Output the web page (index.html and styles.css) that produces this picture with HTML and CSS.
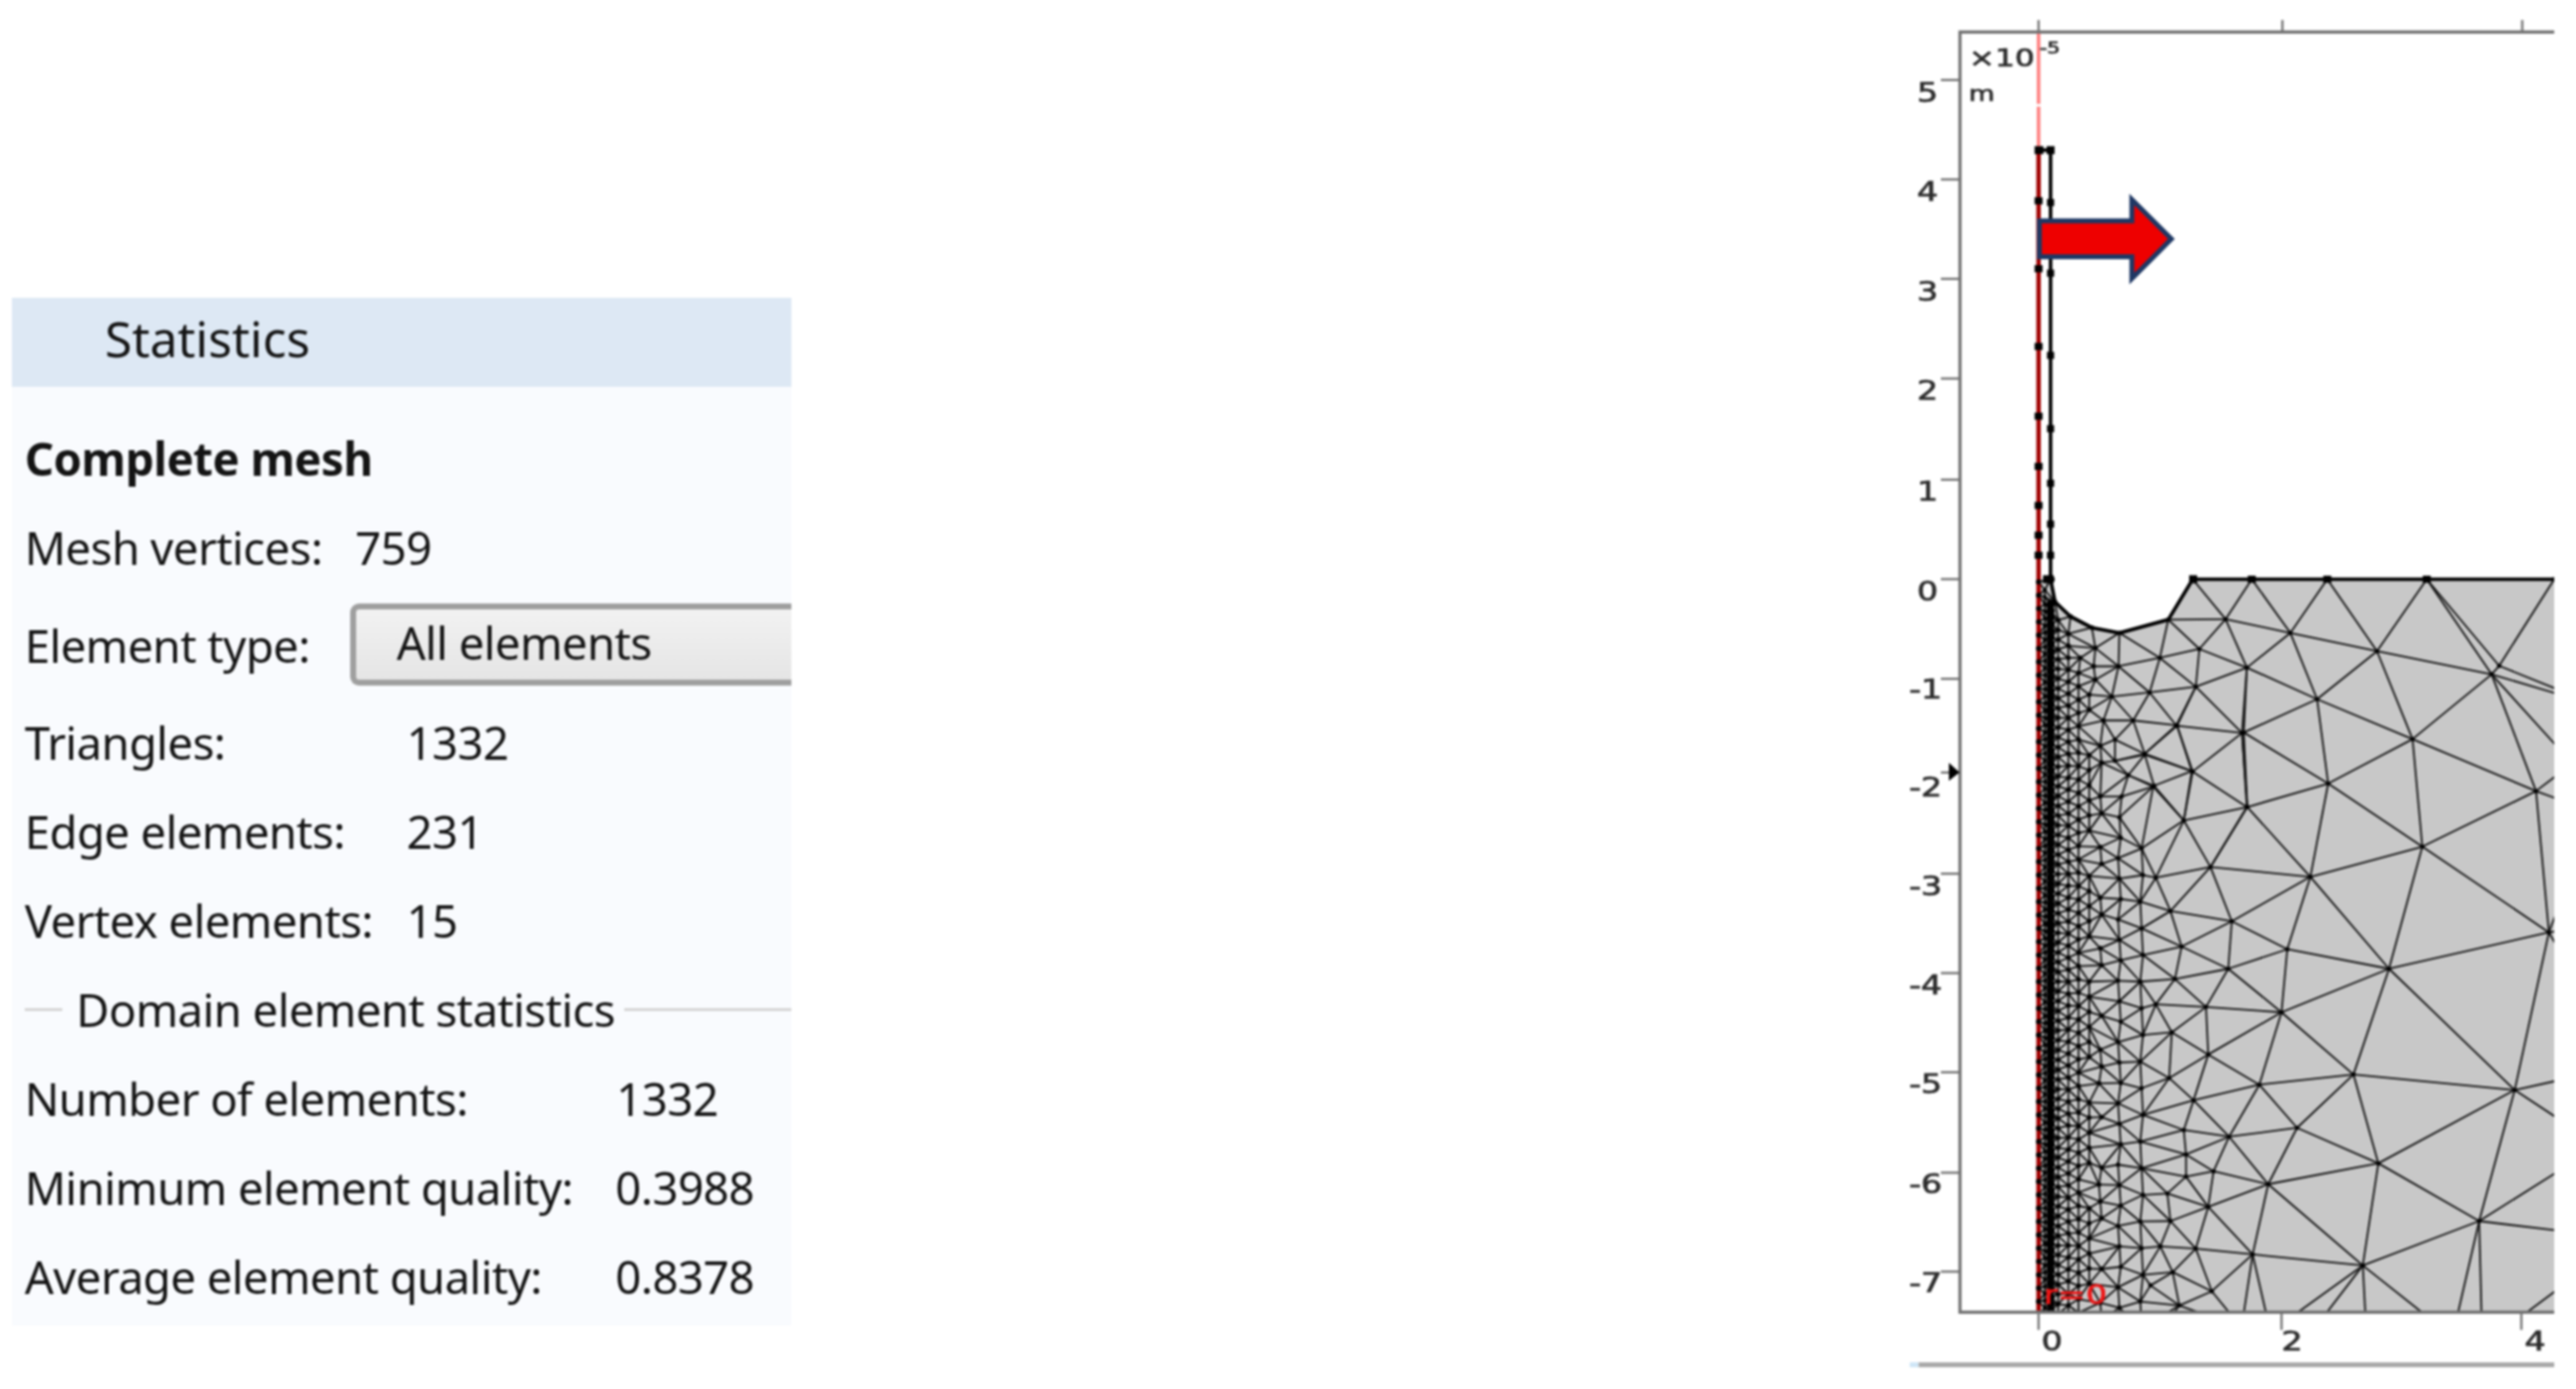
FILE: index.html
```html
<!DOCTYPE html>
<html lang="en">
<head>
<meta charset="utf-8">
<title>Mesh statistics</title>
<link rel="stylesheet" href="styles.css">
</head>
<body>
<main class="page">
  <section class="panel">
    <h2 class="panel-title">Statistics</h2>
    <div class="panel-body">
      <h3 class="section-title">Complete mesh</h3>
      <div class="row row-vertices"><span class="label">Mesh vertices:</span><span>759</span></div>
      <div class="row row-select"><span class="label">Element type:</span><div class="select">All elements</div></div>
      <div class="group-a">
        <div class="row"><span class="label">Triangles:</span><span>1332</span></div>
        <div class="row"><span class="label">Edge elements:</span><span>231</span></div>
        <div class="row"><span class="label">Vertex elements:</span><span>15</span></div>
      </div>
      <div class="row legend"><span class="legend-text">Domain element statistics</span></div>
      <div class="group-b">
        <div class="row"><span class="label">Number of elements:</span><span>1332</span></div>
        <div class="row"><span class="label">Minimum element quality:</span><span class="num">0.3988</span></div>
        <div class="row"><span class="label">Average element quality:</span><span class="num">0.8378</span></div>
      </div>
    </div>
  </section>

  <svg class="plot" viewBox="0 0 1519 3127" role="img" aria-label="Mesh plot">
    <defs>
      <clipPath id="frame"><rect x="181" y="72" width="1338" height="2882"/></clipPath>
    </defs>
    <g clip-path="url(#frame)">
      <polygon class="domain" points="358,1304 385,1304 395,1355 430,1388 478,1413 540,1425 650,1395 705,1304 1600,1304 1600,3100 358,3100"/>
      <g id="edges" class="edges"></g>
      <path class="wall" d="M385 1304V338H358M385 1304L395 1355L430 1388L478 1413L540 1425L650 1395L705 1304H1519"/>
      <path class="axis-line" d="M358 338V72"/>
      <path class="axis-gap" d="M350 237H366"/>
      <path class="axis-red" d="M358 338V2954"/>
      <g id="dots" class="dots"></g>
      <g class="strip-nodes">
        <rect x="349" y="329" width="20" height="18"/><rect x="376" y="329" width="18" height="18"/>
        <rect x="377" y="448" width="16" height="16"/><rect x="377" y="607" width="16" height="16"/><rect x="377" y="792" width="16" height="16"/>
        <rect x="377" y="957" width="16" height="16"/><rect x="377" y="1080" width="16" height="16"/><rect x="377" y="1172" width="16" height="16"/>
        <rect x="377" y="1242" width="16" height="16"/><rect x="368" y="1295" width="24" height="18"/>
        <rect x="349" y="444" width="18" height="16"/><rect x="349" y="597" width="18" height="16"/><rect x="349" y="772" width="18" height="16"/>
        <rect x="349" y="929" width="18" height="16"/><rect x="349" y="1042" width="18" height="16"/><rect x="349" y="1130" width="18" height="16"/>
        <rect x="349" y="1197" width="18" height="16"/><rect x="349" y="1242" width="18" height="16"/>
        <rect x="697" y="1295" width="18" height="18"/><rect x="829" y="1296" width="18" height="16"/><rect x="999" y="1296" width="18" height="16"/>
        <rect x="1223" y="1296" width="18" height="16"/>
      </g>
    </g>

    <path class="frame" d="M1519 72H181V2954H1519"/>
    <path class="tick" d="M358 45V72M907 45V72M1447 45V72M138 180H181M138 404H181M138 628H181M138 852H181M138 1080H181M138 1304H181M138 1528H181M138 1739H181M138 1967H181M138 2191H181M138 2414H181M138 2640H181M138 2863H181M358 2954V2994M905 2954V2994M1445 2954V2994"/>
    <polygon class="marker" points="156,1717 180,1739 156,1758"/>
    <polygon class="arrow" points="360,497 568,497 568,449 657,538 568,627 568,578 360,578"/>

    <g class="axis-text">
      <text transform="translate(84 229) scale(1.3 1)">5</text>
      <text transform="translate(84 452) scale(1.3 1)">4</text>
      <text transform="translate(84 677) scale(1.3 1)">3</text>
      <text transform="translate(84 900) scale(1.3 1)">2</text>
      <text transform="translate(84 1126) scale(1.3 1)">1</text>
      <text transform="translate(84 1352) scale(1.3 1)">0</text>
      <text transform="translate(66 1572) scale(1.3 1)">-1</text>
      <text transform="translate(66 1794) scale(1.3 1)">-2</text>
      <text transform="translate(66 2016) scale(1.3 1)">-3</text>
      <text transform="translate(66 2238) scale(1.3 1)">-4</text>
      <text transform="translate(66 2461) scale(1.3 1)">-5</text>
      <text transform="translate(66 2686) scale(1.3 1)">-6</text>
      <text transform="translate(66 2908) scale(1.3 1)">-7</text>
      <text transform="translate(364 3041) scale(1.3 1)">0</text>
      <text transform="translate(905 3041) scale(1.3 1)">2</text>
      <text transform="translate(1452 3041) scale(1.3 1)">4</text>
      <text class="unit-exp" transform="translate(201 150) scale(1.3 1)">×10</text>
      <text class="unit-sup" transform="translate(360 120) scale(1.3 1)">-5</text>
      <text class="unit-m" transform="translate(201 228) scale(1.3 1)">m</text>
    </g>
    <text class="r-zero" transform="translate(370 2936) scale(1.3 1)">r=0</text>

    <rect class="scroll-cap" x="68" y="3067" width="20" height="11"/>
    <rect class="scroll-line" x="88" y="3067" width="1431" height="11"/>
  </svg>
</main>
<script src="mesh.js"></script>
</body>
</html>
```

FILE: styles.css
```css
* { box-sizing: border-box; }

html, body {
  margin: 0;
  padding: 0;
  background: #ffffff;
}

.page {
  display: flex;
  justify-content: space-between;
  align-items: flex-start;
  width: 2604px;
  height: 1404px;
  overflow: hidden;
  padding-right: 22px;
}

/* statistics panel */
.panel {
  width: 788px;
  height: 1039px;
  margin: 301px 0 0 12px;
  background: #f9fbfe;
  overflow: hidden;
  font-family: "Noto Sans", "Open Sans", sans-serif;
  font-size: 46px;
  letter-spacing: -0.6px;
  color: #141414;
  filter: blur(0.8px);
}

.panel-title {
  display: flex;
  align-items: center;
  height: 90px;
  margin: 0;
  padding: 0 0 9px 94px;
  background: #dde8f4;
  font-size: 50px;
  font-weight: 400;
  letter-spacing: 0;
}

.panel-body {
  padding: 27px 0 0 13px;
}

.section-title {
  display: flex;
  align-items: center;
  height: 90px;
  margin: 0;
  font-size: 46px;
  font-weight: 700;
  letter-spacing: -0.5px;
}

.row {
  display: flex;
  align-items: center;
  height: 90px;
}

.row-vertices .label { width: 334px; }

.row-select {
  height: 107px;
}
.row-select .label { width: 329px; }

.select {
  flex: 1;
  display: flex;
  align-items: center;
  height: 83px;
  padding: 0 0 5px 41px;
  border: 6px solid #9f9f9f;
  border-right: 0;
  border-radius: 9px 0 0 9px;
  background: linear-gradient(#f2f2f2, #e5e5e5);
}

.group-a .label { width: 386px; }
.group-b .label { width: 598px; }
.group-b .num { margin-left: -1px; }

.legend {
  gap: 9px;
}
.legend::before {
  content: "";
  width: 38px;
  height: 3px;
  margin-right: 5px;
  background: #d6d6d6;
}
.legend::after {
  content: "";
  flex: 1;
  height: 3px;
  background: #d6d6d6;
}
.legend-text { white-space: nowrap; }

/* mesh plot */
.plot {
  display: block;
  width: 682px;
  height: 1404px;
  filter: blur(1px);
}

.domain { fill: #c8c8c8; }
.edges line { stroke: #111111; stroke-width: 4; }
.dots circle { fill: #000000; }
.wall { fill: none; stroke: #000000; stroke-width: 8; }
.axis-line { fill: none; stroke: #ff8080; stroke-width: 8; }
.axis-gap { stroke: #ffffff; stroke-width: 6; }
.axis-red { fill: none; stroke: #a00000; stroke-width: 10; }
.strip-nodes rect { fill: #000000; }
.frame { fill: none; stroke: #707070; stroke-width: 7; }
.tick { fill: none; stroke: #707070; stroke-width: 5; }
.marker { fill: #000000; }
.arrow { fill: #ee0000; stroke: #1f3864; stroke-width: 11; }

.axis-text text {
  font-family: "DejaVu Sans", sans-serif;
  font-size: 58px;
  fill: #2c2c2c;
  stroke: #2c2c2c;
  stroke-width: 1.5;
}
.axis-text .unit-exp { font-size: 54px; }
.axis-text .unit-sup { font-size: 36px; }
.axis-text .unit-m { font-size: 46px; }

.r-zero {
  font-family: "DejaVu Sans", sans-serif;
  font-size: 58px;
  fill: #ee1515;
  stroke: #ee1515;
  stroke-width: 1.5;
}

.scroll-cap { fill: #cfe6f7; }
.scroll-line { fill: #a9a9a9; }
```

FILE: mesh.js
```js
// Triangulates the mesh vertices read off the plot and draws edges and nodes.
(function () {
  var NS = 'http://www.w3.org/2000/svg';
  var OFF = 1559; // y offset of the lower half of the plot

  // boundary and upper coarse nodes
  var upper = [
    [385,1304],[395,1355],[430,1388],[478,1413],[540,1425],[650,1395],[705,1304],
    [838,1304],[1008,1304],[1232,1304],[1519,1304],[1800,1304],
    [779,1394],[925,1425],[1120,1466],[1378,1518],[720,1461],[631,1481],[538,1500],
    [827,1503],[712,1546],[608,1559],[523,1568],[668,1633],[816,1650],[571,1622],
    [504,1622],[597,1699],[703,1736],[530,1665],[530,1713],[560,1745],[616,1771],
    [545,1793],[827,1817],[486,1459],[482,1500],[486,1530],[452,1481],[1620,1590]
  ];
  // lower coarse nodes, y measured from OFF
  var lower = [
    [985,15],[820,90],[670,75],[1200,105],[1478,222],[1010,205],[828,258],[705,178],
    [597,138],[618,210],[685,288],[1222,347],[970,415],[745,393],[622,417],[655,492],
    [793,515],[1507,540],[680,572],[918,578],[1147,622],[785,622],[665,645],[905,720],
    [735,708],[622,702],[658,765],[740,815],[1067,860],[855,883],[1430,895],[652,868],
    [707,918],[940,980],[787,1000],[685,985],[690,1040],[1123,1060],[752,1078],[875,1107],
    [690,1090],[648,1128],[740,1158],[1350,1190],[655,1190],[712,1252],[632,1247],
    [840,1265],[1088,1290],[660,1305],[748,1348],[610,1335],[675,1380],
    [880,1440],[815,1430],[950,1470],[1097,1460],[1290,1450],[1357,1470],[1700,1400],
    [1560,160],[1610,270],[1680,840],[1620,1020],[1680,1230],[1395,-60],[1750,500]
  ];
  var pts = upper.concat(lower.map(function (p) { return [p[0], p[1] + OFF]; }));

  // fine columns near the axis: x, spacing, first y
  var columns = [
    [358,30,1310],[372,16,1320],[385,15,1360],[402,22,1385],[425,27,1400],
    [448,30,1500],[472,34,1530],[497,38,1660],[540,46,1840],[590,60,1880]
  ];
  var YMAX = 3060;
  columns.forEach(function (c, i) {
    var n = 0;
    for (var y = c[2] + (i % 2 ? c[1] / 2 : 0); y < YMAX; y += c[1]) {
      n++;
      var q = [c[0] + (i > 6 ? (n % 3 - 1) * 3 : 0), y];
      var near = pts.some(function (p) {
        return Math.hypot(p[0] - q[0], p[1] - q[1]) < Math.min(c[1] * 0.72, 26);
      });
      if (!near) pts.push(q);
    }
  });

  var outline = [
    [358,1304],[385,1304],[395,1355],[430,1388],[478,1413],[540,1425],[650,1395],
    [705,1304],[1900,1304],[1900,3300],[358,3300]
  ];
  function inside(x, y) {
    var hit = false;
    for (var i = 0, j = outline.length - 1; i < outline.length; j = i++) {
      var a = outline[i], b = outline[j];
      if ((a[1] > y) !== (b[1] > y) && x < (b[0] - a[0]) * (y - a[1]) / (b[1] - a[1]) + a[0]) hit = !hit;
    }
    return hit;
  }

  function circum(t, P) {
    var a = P[t[0]], b = P[t[1]], c = P[t[2]];
    var d = 2 * (a[0] * (b[1] - c[1]) + b[0] * (c[1] - a[1]) + c[0] * (a[1] - b[1]));
    var a2 = a[0] * a[0] + a[1] * a[1], b2 = b[0] * b[0] + b[1] * b[1], c2 = c[0] * c[0] + c[1] * c[1];
    var x = (a2 * (b[1] - c[1]) + b2 * (c[1] - a[1]) + c2 * (a[1] - b[1])) / d;
    var y = (a2 * (c[0] - b[0]) + b2 * (a[0] - c[0]) + c2 * (b[0] - a[0])) / d;
    return { v: t, x: x, y: y, r: (x - a[0]) * (x - a[0]) + (y - a[1]) * (y - a[1]) };
  }

  // Bowyer-Watson
  var P = pts.slice();
  var s = P.length;
  P.push([-20000, -20000], [30000, -20000], [1000, 40000]);
  var tris = [circum([s, s + 1, s + 2], P)];
  for (var k = 0; k < s; k++) {
    var p = P[k], keep = [], border = {};
    tris.forEach(function (t) {
      var dx = p[0] - t.x, dy = p[1] - t.y;
      if (dx * dx + dy * dy < t.r) {
        [[t.v[0], t.v[1]], [t.v[1], t.v[2]], [t.v[2], t.v[0]]].forEach(function (e) {
          var key = Math.min(e[0], e[1]) + '_' + Math.max(e[0], e[1]);
          border[key] = border[key] ? null : e;
        });
      } else keep.push(t);
    });
    Object.keys(border).forEach(function (key) {
      var e = border[key];
      if (e) keep.push(circum([e[0], e[1], k], P));
    });
    tris = keep;
  }

  var edges = document.getElementById('edges');
  var dots = document.getElementById('dots');
  var seen = {};
  tris.forEach(function (t) {
    if (t.v[0] >= s || t.v[1] >= s || t.v[2] >= s) return;
    var cx = (P[t.v[0]][0] + P[t.v[1]][0] + P[t.v[2]][0]) / 3;
    var cy = (P[t.v[0]][1] + P[t.v[1]][1] + P[t.v[2]][1]) / 3;
    if (!inside(cx, cy)) return;
    [[t.v[0], t.v[1]], [t.v[1], t.v[2]], [t.v[2], t.v[0]]].forEach(function (e) {
      var key = Math.min(e[0], e[1]) + '_' + Math.max(e[0], e[1]);
      if (seen[key]) return;
      seen[key] = 1;
      var l = document.createElementNS(NS, 'line');
      l.setAttribute('x1', P[e[0]][0]); l.setAttribute('y1', P[e[0]][1]);
      l.setAttribute('x2', P[e[1]][0]); l.setAttribute('y2', P[e[1]][1]);
      edges.appendChild(l);
    });
  });
  pts.forEach(function (q) {
    var c = document.createElementNS(NS, 'circle');
    var r = q[0] < 365 ? 6 : q[0] < 378 ? 4.5 : q[0] < 392 ? 9.5 : q[0] < 520 ? 5.5 : 5;
    c.setAttribute('cx', q[0]); c.setAttribute('cy', q[1]);
    c.setAttribute('r', r);
    dots.appendChild(c);
  });
})();
```
